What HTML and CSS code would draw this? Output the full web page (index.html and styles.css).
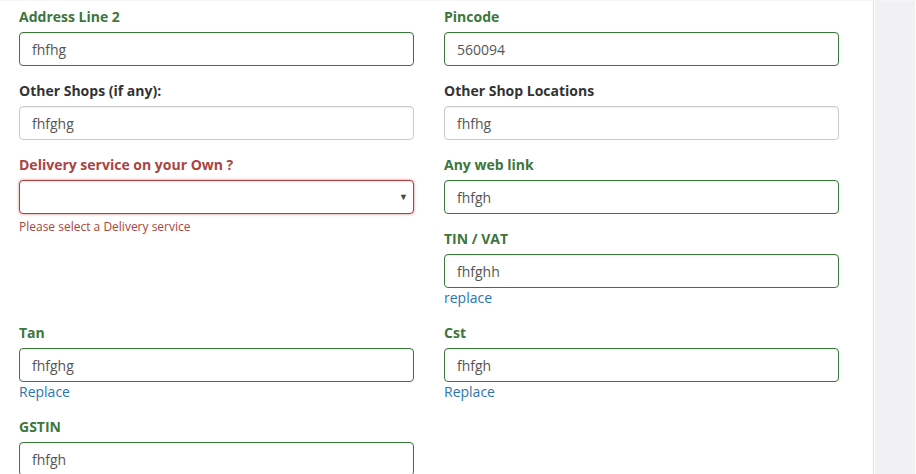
FILE: index.html
```html
<!DOCTYPE html>
<html>
<head>
<meta charset="utf-8">
<link rel="stylesheet" href="styles.css">
</head>
<body>
<div class="page">
  <main class="main">
    <div class="row">
      <div class="col">
        <div class="group ok"><label>Address Line 2</label><input class="ctl" value="fhfhg"></div>
        <div class="group"><label>Other Shops (if any):</label><input class="ctl" value="fhfghg"></div>
        <div class="group err">
          <label>Delivery service on your Own ?</label>
          <div class="select ctl"><span class="caret">▼</span></div>
          <span class="help">Please select a Delivery service</span>
        </div>
      </div>
      <div class="col">
        <div class="group ok"><label>Pincode</label><input class="ctl" value="560094"></div>
        <div class="group"><label>Other Shop Locations</label><input class="ctl" value="fhfhg"></div>
        <div class="group ok"><label>Any web link</label><input class="ctl" value="fhfgh"></div>
        <div class="group ok"><label>TIN / VAT</label><input class="ctl" value="fhfghh"><a class="link">replace</a></div>
      </div>
    </div>
    <div class="row">
      <div class="col">
        <div class="group ok"><label>Tan</label><input class="ctl" value="fhfghg"><a class="link">Replace</a></div>
        <div class="group ok"><label>GSTIN</label><input class="ctl" value="fhfgh"></div>
      </div>
      <div class="col">
        <div class="group ok"><label>Cst</label><input class="ctl" value="fhfgh"><a class="link">Replace</a></div>
      </div>
    </div>
  </main>
  <aside class="side"></aside>
</div>
</body>
</html>
```
FILE: styles.css
```css
* { box-sizing: border-box; }
html, body { margin: 0; padding: 0; }
body {
  font-family: "Open Sans", "Liberation Sans", sans-serif;
  font-size: 14px;
  line-height: 20px;
  color: #333;
  background: #fff;
  width: 916px;
  height: 474px;
  overflow: hidden;
}
.page {
  display: flex;
  height: 474px;
  border-top: 1px solid #f5f5f5;
}
.main {
  width: 874px;
  padding: 6px 0 0 4px;
  border-right: 1px solid #dedede;
}
.side {
  flex: 1;
  margin-left: 1px;
  margin-right: 1px;
  background: #f0f0f5;
}
.row { display: flex; }
.col {
  width: 425px;
  padding: 0 15px;
}
.group { margin-bottom: 15px; }
label {
  display: block;
  font-weight: 700;
  margin-bottom: 5px;
  color: #333;
}
.ctl {
  display: block;
  width: 100%;
  height: 34px;
  padding: 6px 12px;
  font-family: inherit;
  font-size: 14px;
  line-height: 20px;
  color: #555;
  background: #fff;
  border: 1px solid #ccc;
  border-radius: 4px;
  box-shadow: inset 0 1px 1px rgba(0,0,0,.075);
  outline: none;
}
.ok label { color: #3c763d; }
.ok .ctl { border-color: #3c763d; }
.err label { color: #a94442; }
.err .ctl {
  border-color: #a94442;
  box-shadow: inset 0 1px 1px rgba(0,0,0,.075), 0 0 3px #ce8483;
}
.select {
  position: relative;
}
.caret {
  position: absolute;
  right: 5px;
  top: 9px;
  font-size: 9px;
  line-height: 14px;
  color: #444;
}
.help {
  display: block;
  margin-top: 4px;
  font-size: 12px;
  line-height: 17px;
  color: #a94442;
}
.link {
  display: block;
  color: #2a76ad;
  line-height: 20px;
}
```
